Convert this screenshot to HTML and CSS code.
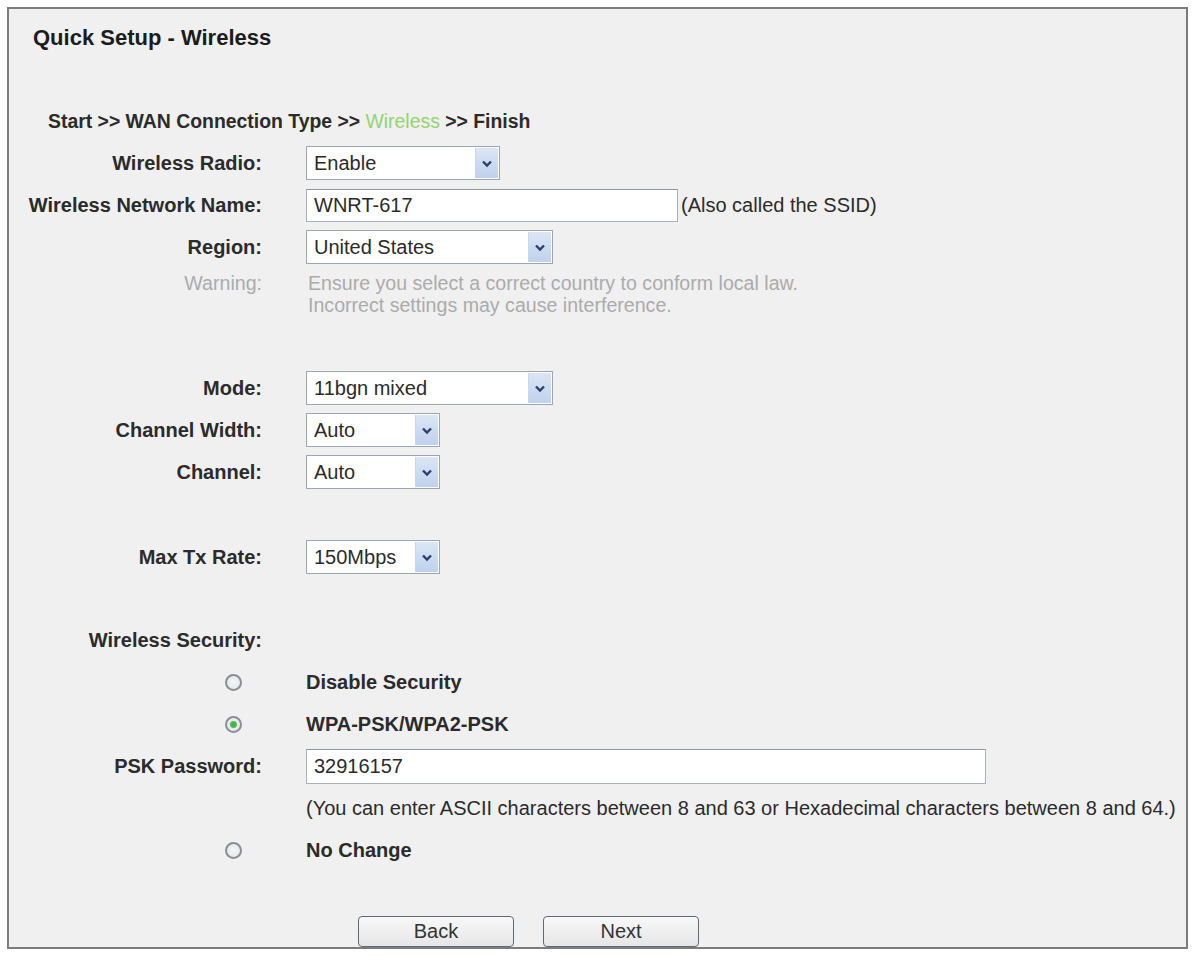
FILE: index.html
```html
<!DOCTYPE html>
<html lang="en">
<head>
    <meta charset="UTF-8">
    <meta name="viewport" content="width=device-width, initial-scale=1.0">
    <title>Quick Setup - Wireless</title>
    <link rel="stylesheet" href="styles.css">
</head>
<body>
    <form class="frame">
        <h1>Quick Setup - Wireless</h1>
        <div class="steps">Start &gt;&gt; WAN Connection Type &gt;&gt; <span class="current">Wireless</span> &gt;&gt; Finish</div>

        <div class="row">
            <label class="name" for="radio">Wireless Radio:</label>
            <div class="select w-194">
                <select id="radio"><option>Enable</option><option>Disable</option></select>
                <span class="arrow"><svg width="12" height="9" viewBox="0 0 12 9"><path d="M2 2.5 L6 6.5 L10 2.5" fill="none" stroke="#2d3f66" stroke-width="2.4"/></svg></span>
            </div>
        </div>
        <div class="row">
            <label class="name" for="ssid">Wireless Network Name:</label>
            <div class="value">
                <input type="text" id="ssid" class="text w-372" value="WNRT-617">
                <span class="note">(Also called the SSID)</span>
            </div>
        </div>
        <div class="row">
            <label class="name" for="region">Region:</label>
            <div class="select w-247">
                <select id="region"><option>United States</option></select>
                <span class="arrow"><svg width="12" height="9" viewBox="0 0 12 9"><path d="M2 2.5 L6 6.5 L10 2.5" fill="none" stroke="#2d3f66" stroke-width="2.4"/></svg></span>
            </div>
        </div>
        <div class="row warning">
            <span class="name">Warning:</span>
            <div class="value">Ensure you select a correct country to conform local law.<br>Incorrect settings may cause interference.</div>
        </div>

        <div class="row mode">
            <label class="name" for="mode">Mode:</label>
            <div class="select w-247">
                <select id="mode"><option>11bgn mixed</option></select>
                <span class="arrow"><svg width="12" height="9" viewBox="0 0 12 9"><path d="M2 2.5 L6 6.5 L10 2.5" fill="none" stroke="#2d3f66" stroke-width="2.4"/></svg></span>
            </div>
        </div>
        <div class="row">
            <label class="name" for="width">Channel Width:</label>
            <div class="select w-134">
                <select id="width"><option>Auto</option></select>
                <span class="arrow"><svg width="12" height="9" viewBox="0 0 12 9"><path d="M2 2.5 L6 6.5 L10 2.5" fill="none" stroke="#2d3f66" stroke-width="2.4"/></svg></span>
            </div>
        </div>
        <div class="row">
            <label class="name" for="channel">Channel:</label>
            <div class="select w-134">
                <select id="channel"><option>Auto</option></select>
                <span class="arrow"><svg width="12" height="9" viewBox="0 0 12 9"><path d="M2 2.5 L6 6.5 L10 2.5" fill="none" stroke="#2d3f66" stroke-width="2.4"/></svg></span>
            </div>
        </div>

        <div class="row spaced">
            <label class="name" for="rate">Max Tx Rate:</label>
            <div class="select w-134">
                <select id="rate"><option>150Mbps</option></select>
                <span class="arrow"><svg width="12" height="9" viewBox="0 0 12 9"><path d="M2 2.5 L6 6.5 L10 2.5" fill="none" stroke="#2d3f66" stroke-width="2.4"/></svg></span>
            </div>
        </div>

        <div class="row security">
            <span class="name">Wireless Security:</span>
            <div class="value"></div>
        </div>
        <div class="row">
            <div class="pick"><input type="radio" name="sec" id="sec-off"></div>
            <label class="value bold" for="sec-off">Disable Security</label>
        </div>
        <div class="row">
            <div class="pick"><input type="radio" name="sec" id="sec-wpa" checked></div>
            <label class="value bold" for="sec-wpa">WPA-PSK/WPA2-PSK</label>
        </div>
        <div class="row">
            <label class="name" for="psk">PSK Password:</label>
            <div class="value">
                <input type="text" id="psk" class="text w-680" value="32916157">
            </div>
        </div>
        <div class="row">
            <span class="name"></span>
            <div class="value">(You can enter ASCII characters between 8 and 63 or Hexadecimal characters between 8 and 64.)</div>
        </div>
        <div class="row">
            <div class="pick"><input type="radio" name="sec" id="sec-keep"></div>
            <label class="value bold" for="sec-keep">No Change</label>
        </div>

        <div class="row actions">
            <span class="name"></span>
            <div class="buttons">
                <button type="button">Back</button>
                <button type="button">Next</button>
            </div>
        </div>
    </form>
</body>
</html>
```

FILE: styles.css
```css
body {
    margin: 0;
    background: #fff;
    font-family: "Liberation Sans", Arial, sans-serif;
    color: #2b2b2b;
}
.frame {
    box-sizing: border-box;
    width: 1181px;
    height: 942px;
    margin: 7px 0 0 7px;
    padding: 16px 0 0 0;
    border: 2px solid #7c7c7c;
    background: #f0f0f0;
    overflow: hidden;
}
h1 {
    margin: 0 0 0 24px;
    font-size: 22px;
    line-height: 26px;
    font-weight: bold;
    color: #1c1c1c;
}
.steps {
    margin: 58px 0 9px 39px;
    font-size: 19.4px;
    line-height: 24px;
    font-weight: bold;
}
.steps .current {
    color: #92d46e;
    font-weight: normal;
}
.row {
    display: grid;
    grid-template-columns: 253px 1fr;
    column-gap: 44px;
    align-items: center;
    min-height: 42px;
    font-size: 20px;
}
.row .name {
    text-align: right;
    font-weight: bold;
}
.value {
    display: flex;
    align-items: center;
}
.bold {
    font-weight: bold;
}
.warning {
    align-items: start;
    padding-top: 4px;
    line-height: 22px;
    font-size: 19.6px;
    color: #ababab;
}
.warning .name {
    font-weight: normal;
}
.warning .value {
    display: block;
    padding-left: 2px;
}
.mode {
    margin-top: 51px;
}
.spaced {
    margin-top: 43px;
}
.security {
    margin-top: 41px;
}
.actions {
    align-items: start;
    min-height: 0;
    margin-top: 45px;
}

/* drop-down lists */
.select {
    position: relative;
    box-sizing: border-box;
    height: 34px;
    border: 1px solid #98a6b8;
    background: #fff;
}
.select select {
    appearance: none;
    -webkit-appearance: none;
    width: 100%;
    height: 100%;
    margin: 0;
    padding: 0 0 0 7px;
    border: none;
    outline: none;
    background: transparent;
    font-family: inherit;
    font-size: 20px;
    color: #2b2b2b;
}
.select .arrow {
    position: absolute;
    top: 1px;
    right: 1px;
    bottom: 1px;
    width: 22px;
    display: flex;
    align-items: center;
    justify-content: center;
    background: linear-gradient(#dbe6f6, #bfd1ee);
    border-left: 1px solid #cad7ea;
    pointer-events: none;
}
.w-134 { width: 134px; }
.w-194 { width: 194px; }
.w-247 { width: 247px; }

/* text fields */
.text {
    box-sizing: border-box;
    height: 33px;
    margin: 0;
    padding: 0 7px;
    border: 1px solid #a9b0ba;
    border-top-color: #8e96a2;
    background: #fff;
    font-family: inherit;
    font-size: 20px;
    color: #2b2b2b;
}
.w-372 { width: 372px; }
.w-680 { width: 680px; height: 35px; }
.note {
    margin-left: 3px;
}

/* radio buttons */
.pick {
    display: flex;
    justify-content: flex-end;
    padding-right: 20px;
}
.pick input {
    appearance: none;
    -webkit-appearance: none;
    box-sizing: border-box;
    width: 17px;
    height: 17px;
    margin: 0;
    border: 2px solid #8a8d92;
    border-radius: 50%;
    background: radial-gradient(circle, #f4f6f8 0, #dfe4ea 100%);
}
.pick input:checked {
    background: radial-gradient(circle, #3fae3f 0, #4cbf4c 3px, #e3e8ee 4px, #f4f6f8 100%);
}

/* buttons */
.buttons {
    display: flex;
    gap: 29px;
    margin-left: 52px;
}
.buttons button {
    box-sizing: border-box;
    width: 156px;
    height: 31px;
    border: 1px solid #5f6975;
    border-radius: 4px;
    background: linear-gradient(#f8f8f8, #e6e6e6);
    font-family: inherit;
    font-size: 20px;
    color: #333;
    cursor: pointer;
}
```
